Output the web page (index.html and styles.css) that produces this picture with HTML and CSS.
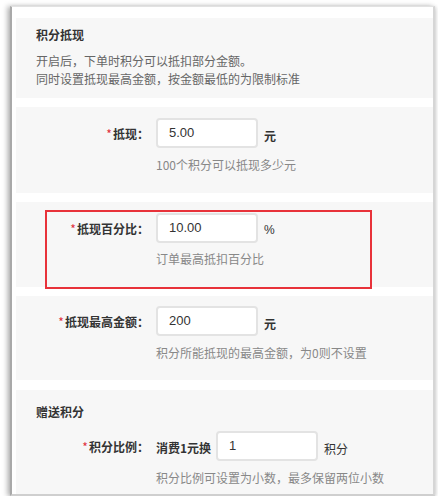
FILE: index.html
```html
<!DOCTYPE html>
<html lang="zh-CN">
<head>
<meta charset="utf-8">
<title>积分设置</title>
<link rel="stylesheet" href="styles.css">
</head>
<body>
<div class="frame">
  <section class="panel panel-intro">
    <h2 class="panel-title">积分抵现</h2>
    <p class="desc">开启后，下单时积分可以抵扣部分金额。</p>
    <p class="desc">同时设置抵现最高金额，按金额最低的为限制标准</p>
  </section>

  <section class="panel panel-field p2">
    <div class="row">
      <label class="label"><span class="req">*</span>抵现<span class="colon">：</span></label>
      <div class="control">
        <div class="input">5.00</div>
        <span class="unit bold">元</span>
      </div>
    </div>
    <div class="help">100个积分可以抵现多少元</div>
  </section>

  <section class="panel panel-field p3">
    <div class="row">
      <label class="label"><span class="req">*</span>抵现百分比<span class="colon">：</span></label>
      <div class="control">
        <div class="input">10.00</div>
        <span class="unit pct">%</span>
      </div>
    </div>
    <div class="help">订单最高抵扣百分比</div>
    <div class="highlight"></div>
  </section>

  <section class="panel panel-field p4">
    <div class="row">
      <label class="label"><span class="req">*</span>抵现最高金额<span class="colon">：</span></label>
      <div class="control">
        <div class="input">200</div>
        <span class="unit bold">元</span>
      </div>
    </div>
    <div class="help">积分所能抵现的最高金额，为0则不设置</div>
  </section>

  <section class="panel panel-gift">
    <h2 class="panel-title">赠送积分</h2>
    <div class="row">
      <label class="label"><span class="req">*</span>积分比例<span class="colon">：</span></label>
      <div class="control">
        <span class="prefix">消费1元换</span>
        <div class="input">1</div>
        <span class="unit">积分</span>
      </div>
    </div>
    <div class="help">积分比例可设置为小数，最多保留两位小数</div>
  </section>
</div>
</body>
</html>
```

FILE: styles.css
```css
* { box-sizing: border-box; }

html, body {
  margin: 0;
  padding: 0;
  background: #ffffff;
}

body {
  font-family: "Noto Sans CJK SC", "Noto Sans", "Liberation Sans", sans-serif;
  font-size: 12px;
  color: #333;
}

.frame {
  margin: 6px 0 0 10px;
  width: 425px;
  height: 490px;
  background: #ffffff;
  border-left: 2px solid #a9a9a9;
  border-top: 1px solid #e2e2e2;
  border-right: 2px solid #d6d6d6;
  border-bottom: 2px solid #cfcfcf;
  box-shadow: -3px 0 5px rgba(0, 0, 0, 0.25), 0 3px 4px rgba(0, 0, 0, 0.12), 2px 0 3px rgba(0, 0, 0, 0.08);
  padding: 11px 0 0 4px;
  display: flex;
  flex-direction: column;
  gap: 9px;
  overflow: hidden;
}

.panel {
  background: #f7f7f7;
  position: relative;
}

.panel-title {
  margin: 0;
  font-size: 12px;
  line-height: 18px;
  font-weight: bold;
  color: #333;
  padding-left: 20px;
}

.panel-intro {
  height: 80px;
  padding: 8px 0 0 0;
}

.panel-intro .panel-title {
  margin-bottom: 8px;
}

.desc {
  margin: 0;
  padding-left: 20px;
  line-height: 18px;
  color: #666;
}

.panel-field {
  padding-top: 11px;
}

.p2 { height: 86px; }
.p3 { height: 85px; }
.p4 { height: 84px; padding-top: 10px; }

.panel-gift {
  margin-top: 1px;
  flex: 1;
  padding-top: 13px;
}

.panel-gift .panel-title {
  margin-bottom: 10px;
}

.row {
  display: flex;
  align-items: center;
  height: 30px;
}

.label {
  width: 133px;
  flex: none;
  text-align: right;
  font-weight: bold;
  color: #333;
}

.colon {
  font-family: "Noto Sans CJK TC", "Noto Sans CJK SC", sans-serif;
}

.req {
  color: #e0303a;
  font-weight: normal;
  margin-right: 1px;
}

.control {
  display: flex;
  align-items: center;
  margin-left: 7px;
}

.input {
  width: 102px;
  height: 30px;
  border: 2px solid #e3e3e3;
  border-radius: 4px;
  background: #fff;
  padding-left: 11px;
  line-height: 25px;
  font-family: "Liberation Sans", "Noto Sans", sans-serif;
  font-size: 13px;
  color: #333;
}

.unit {
  margin-left: 6px;
  margin-top: 4px;
  color: #333;
}

.unit.bold { font-weight: bold; }

.unit.pct {
  font-family: "Liberation Sans", sans-serif;
  font-size: 12px;
}

.prefix {
  font-weight: bold;
  color: #333;
  margin-right: 5px;
  margin-top: 2px;
}

.help {
  margin: 8px 0 0 140px;
  line-height: 18px;
  color: #888;
}

.p3 .help { margin-top: 7px; }

.highlight {
  position: absolute;
  left: 29px;
  top: 8px;
  width: 327px;
  height: 79px;
  border: 2px solid #e8323a;
  pointer-events: none;
}
```
